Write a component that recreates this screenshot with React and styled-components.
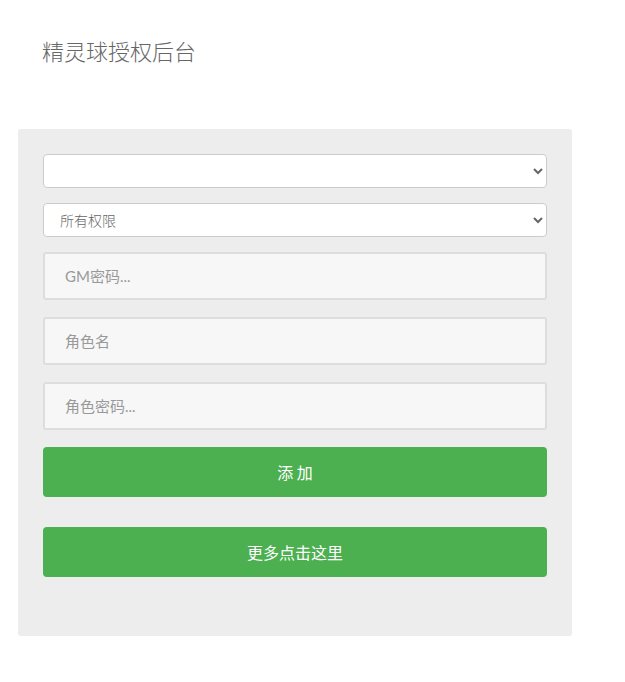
import React from "react";
import styled, { createGlobalStyle } from "styled-components";

const Global = createGlobalStyle`
  html, body { margin: 0; padding: 0; background: #fff; }
  body { font-family: "Open Sans", "Noto Sans CJK SC", sans-serif; }
  * { box-sizing: border-box; }
`;

const Page = styled.div`
  padding: 35px 0 0 0;
`;

const Title = styled.h2`
  margin: 0 0 64px 42px;
  font-size: 22px;
  line-height: 30px;
  font-weight: 300;
  color: #666;
  font-family: "Noto Sans CJK SC", sans-serif;
`;

const Panel = styled.div`
  margin-left: 18px;
  width: 554px;
  background: #ededed;
  border-radius: 3px;
  padding: 25px 25px 59px;
  display: flex;
  flex-direction: column;
`;

const Select = styled.select`
  width: 100%;
  height: 34px;
  margin-bottom: 15px;
  border: 1px solid #ccc;
  border-radius: 4px;
  background: #fff;
  color: #666;
  font-size: 14px;
  font-weight: 300;
  padding: 0 12px;
  font-family: "Noto Sans CJK SC", sans-serif;
`;

const Input = styled.input`
  width: 100%;
  height: 48px;
  margin-bottom: 17px;
  border: 2px solid #ddd;
  border-radius: 3px;
  background: #f7f7f7;
  padding: 0 20px;
  font-size: 15px;
  font-family: "Lato", "Noto Sans CJK SC", sans-serif;
  color: #555;
  &::placeholder { color: #999; }
`;

const Button = styled.button`
  width: 100%;
  height: 50px;
  margin-top: ${(p) => p.$gap || 0}px;
  border: none;
  border-radius: 4px;
  background: #4caf50;
  color: #fff;
  font-size: 16px;
  font-family: "Noto Sans CJK SC", sans-serif;
`;

export default function App() {
  return (
    <Page>
      <Global />
      <Title>精灵球授权后台</Title>
      <Panel>
        <Select defaultValue="">
          <option value=""></option>
        </Select>
        <Select defaultValue="all">
          <option value="all">所有权限</option>
        </Select>
        <Input placeholder="GM密码..." />
        <Input placeholder="角色名" />
        <Input placeholder="角色密码..." />
        <Button>添 加</Button>
        <Button $gap={30}>更多点击这里</Button>
      </Panel>
    </Page>
  );
}
